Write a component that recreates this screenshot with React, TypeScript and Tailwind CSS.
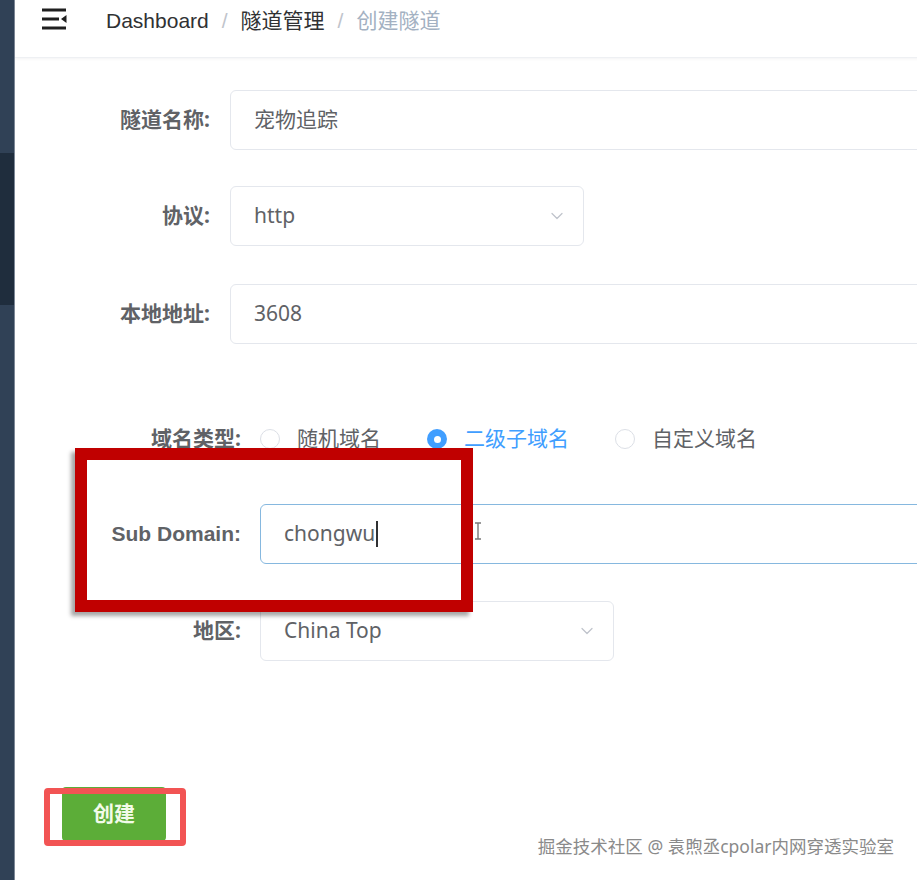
import { ChevronDown } from 'lucide-react';

const cjk = { fontFamily: '"Noto Sans", "Noto Sans CJK SC", sans-serif' };
const latin = { fontFamily: '"Liberation Sans", "Noto Sans CJK SC", sans-serif' };

function Hamburger() {
  return (
    <svg width="26" height="22" viewBox="0 0 26 22" className="text-[#1f1f1f]">
      <rect x="0" y="0.5" width="24" height="3" fill="currentColor" />
      <rect x="0" y="9.5" width="17" height="3" fill="currentColor" />
      <path d="M24.5 7 L19 11 L24.5 15 Z" fill="currentColor" />
      <rect x="0" y="18.5" width="24" height="3" fill="currentColor" />
    </svg>
  );
}

function Label({ text, width, pr, bold = true }: { text: string; width: string; pr: string; bold?: boolean }) {
  return (
    <div className={`${width} ${pr} shrink-0 text-right text-[21px] text-[#606266] ${bold ? 'font-bold' : ''}`}>
      {text}
    </div>
  );
}

function Radio({ label, checked }: { label: string; checked?: boolean }) {
  return (
    <div className="flex items-center gap-[17px]">
      {checked ? (
        <span className="flex h-[20px] w-[20px] items-center justify-center rounded-full bg-[#409eff]">
          <span className="h-[7px] w-[7px] rounded-full bg-white" />
        </span>
      ) : (
        <span className="h-[20px] w-[20px] rounded-full border border-[#dcdfe6] bg-white" />
      )}
      <span className={`text-[21px] ${checked ? 'text-[#409eff]' : 'text-[#606266]'}`}>{label}</span>
    </div>
  );
}

export default function App() {
  return (
    <div className="relative flex h-[880px] w-[917px] overflow-hidden bg-white" style={cjk}>
      <aside className="flex w-[15px] shrink-0 flex-col border-r border-[#7d8897]">
        <div className="h-[153px] bg-[#304156]" />
        <div className="h-[152px] bg-[#1f2d3d]" />
        <div className="flex-1 bg-[#304156]" />
      </aside>

      <main className="flex flex-1 flex-col">
        <header className="flex h-[58px] shrink-0 items-start border-b border-[#eef0f3] shadow-[0_1px_3px_rgba(0,21,41,0.05)]">
          <div className="ml-[27px] mt-[8px]">
            <Hamburger />
          </div>
          <nav className="ml-[38px] mt-[5px] flex items-center text-[21px]">
            <span className="text-[#303133]" style={latin}>Dashboard</span>
            <span className="mx-[13px] text-[#c0c4cc]" style={latin}>/</span>
            <span className="text-[#303133]">隧道管理</span>
            <span className="mx-[13px] text-[#c0c4cc]" style={latin}>/</span>
            <span className="text-[#a3b1c2]">创建隧道</span>
          </nav>
        </header>

        <form className="flex flex-col pt-[32px]">
          <div className="flex items-center">
            <Label text="隧道名称:" width="w-[215px]" pr="pr-[20px]" />
            <div className="flex h-[60px] w-[720px] shrink-0 items-center rounded-[6px] border border-[#e4e7ed] px-[23px] text-[21px] text-[#606266]">
              宠物追踪
            </div>
          </div>

          <div className="mt-[36px] flex items-center">
            <Label text="协议:" width="w-[215px]" pr="pr-[20px]" />
            <div className="flex h-[60px] w-[354px] shrink-0 items-center justify-between rounded-[6px] border border-[#e4e7ed] pl-[23px] pr-[16px] text-[21px] text-[#606266]">
              <span>http</span>
              <ChevronDown className="h-[20px] w-[20px] text-[#c0c4cc]" strokeWidth={1.5} />
            </div>
          </div>

          <div className="mt-[38px] flex items-center">
            <Label text="本地地址:" width="w-[215px]" pr="pr-[20px]" />
            <div className="flex h-[60px] w-[720px] shrink-0 items-center rounded-[6px] border border-[#e4e7ed] px-[23px] text-[21px] text-[#606266]">
              3608
            </div>
          </div>

          <div className="mt-[80px] flex h-[30px] items-center">
            <Label text="域名类型:" width="w-[245px]" pr="pr-[19px]" />
            <div className="flex items-center gap-[46px]">
              <Radio label="随机域名" />
              <Radio label="二级子域名" checked />
              <Radio label="自定义域名" />
            </div>
          </div>

          <div className="mt-[50px] flex items-center">
            <div className="w-[245px] shrink-0 pr-[19px] text-right text-[21px] font-bold text-[#606266]" style={latin}>
              Sub Domain:
            </div>
            <div className="relative flex h-[60px] w-[700px] shrink-0 items-center rounded-[6px] border border-[#86b8df] px-[23px] text-[21px] text-[#606266]">
              <span>chongwu</span>
              <span className="ml-[1px] h-[26px] w-[2px] bg-[#303133]" />
              <svg className="absolute left-[213px] top-[17px]" width="8" height="18" viewBox="0 0 8 18">
                <path d="M1 1 H7 M4 1 V17 M1 17 H7" stroke="#7a7a7a" strokeWidth="1.4" fill="none" />
              </svg>
            </div>
          </div>

          <div className="mt-[37px] flex items-center">
            <Label text="地区:" width="w-[245px]" pr="pr-[19px]" />
            <div className="flex h-[60px] w-[354px] shrink-0 items-center justify-between rounded-[6px] border border-[#e4e7ed] pl-[23px] pr-[16px] text-[21px] text-[#606266]">
              <span>China Top</span>
              <ChevronDown className="h-[20px] w-[20px] text-[#c0c4cc]" strokeWidth={1.5} />
            </div>
          </div>

          <div className="ml-[47px] mt-[126px]">
            <button
              type="button"
              className="flex h-[54px] w-[104px] items-center justify-center rounded-[4px] bg-[#5cad38] text-[21px] font-bold text-[#f2fbe9]"
            >
              创建
            </button>
          </div>
        </form>
      </main>

      {/* highlight frames drawn over the form */}
      <div className="pointer-events-none absolute left-[75px] top-[448px] h-[164px] w-[398px] border-[12px] border-[#c00000] shadow-[-4px_4px_4px_rgba(0,0,0,0.35)]" />
      <div className="pointer-events-none absolute left-[44px] top-[788px] h-[58px] w-[142px] rounded-[4px] border-[6px] border-[#f25454]" />

      <div
        className="pointer-events-none absolute right-[23px] top-[833px] text-[17.5px] text-[#8a8a8a]"
        style={{ ...cjk, textShadow: '0 0 2px #fff, 1px 1px 0 #fff' }}
      >
        掘金技术社区 @ 袁煦丞cpolar内网穿透实验室
      </div>
    </div>
  );
}
